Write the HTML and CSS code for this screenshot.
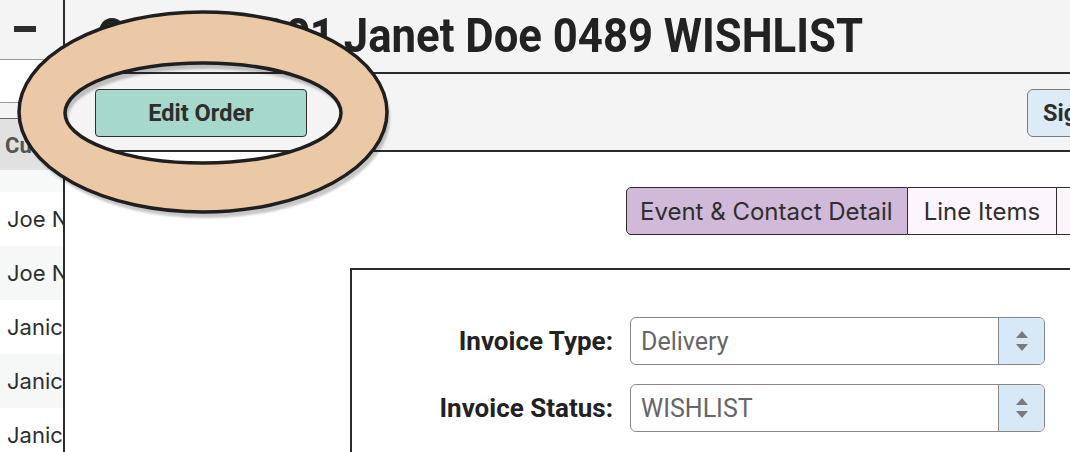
FILE: index.html
```html
<!DOCTYPE html>
<html lang="en">
<head>
    <meta charset="UTF-8">
    <meta name="viewport" content="width=device-width, initial-scale=1.0">
    <title>Order</title>
    <link rel="stylesheet" href="styles.css">
</head>
<body>

    <div class="app">
        <aside class="sidebar">
            <div class="side-top"><span class="collapse"></span></div>
            <div class="side-search"><input type="text" class="search"></div>
            <div class="side-head">Customer</div>
            <div class="side-gap"></div>
            <ul class="side-list">
                <li>Joe Nobody</li>
                <li class="alt">Joe Nobody</li>
                <li>Janice Smith</li>
                <li class="alt">Janice Smith</li>
                <li>Janice Smith</li>
            </ul>
        </aside>

        <main class="main">
            <header class="title-bar">
                <h1><span class="prefix">Order #0001 </span>Janet Doe 0489 WISHLIST</h1>
            </header>

            <div class="toolbar">
                <button class="btn-edit">Edit Order</button>
                <button class="btn-sign">Signature</button>
            </div>

            <div class="content">
                <nav class="tabs">
                    <span class="tab active">Event &amp; Contact Detail</span>
                    <span class="tab">Line Items</span>
                    <span class="tab">Payments</span>
                </nav>

                <section class="panel">
                    <div class="form-grid">
                        <label class="field-label">Invoice Type:</label>
                        <div class="select">
                            <span class="select-value">Delivery</span>
                            <span class="spin">
                                <svg width="14" height="24" viewBox="0 0 14 24">
                                    <polygon points="7,2 13,9 1,9" fill="#7a7a7a"/>
                                    <polygon points="1,15 13,15 7,22" fill="#7a7a7a"/>
                                </svg>
                            </span>
                        </div>

                        <label class="field-label">Invoice Status:</label>
                        <div class="select">
                            <span class="select-value">WISHLIST</span>
                            <span class="spin">
                                <svg width="14" height="24" viewBox="0 0 14 24">
                                    <polygon points="7,2 13,9 1,9" fill="#7a7a7a"/>
                                    <polygon points="1,15 13,15 7,22" fill="#7a7a7a"/>
                                </svg>
                            </span>
                        </div>
                    </div>
                </section>
            </div>
        </main>
    </div>

    <!-- highlight ring drawn over the Edit Order button -->
    <svg class="ring" width="400" height="230" viewBox="0 0 400 230">
        <defs>
            <filter id="soft" x="-10%" y="-10%" width="120%" height="130%">
                <feGaussianBlur stdDeviation="1.2"/>
            </filter>
        </defs>
        <path transform="translate(3,6)" filter="url(#soft)" fill="#000" fill-opacity="0.22" fill-rule="evenodd"
              d="M19,112 a184,100 0 1,0 368,0 a184,100 0 1,0 -368,0 Z M65,113 a138,50 0 1,0 276,0 a138,50 0 1,0 -276,0 Z"/>
        <path fill="#ecc9a6" fill-rule="evenodd" stroke="#1f1f1f" stroke-width="3.5"
              d="M19,112 a184,100 0 1,0 368,0 a184,100 0 1,0 -368,0 Z M65,113 a138,50 0 1,0 276,0 a138,50 0 1,0 -276,0 Z"/>
    </svg>

</body>
</html>
```

FILE: styles.css
```css
* {
    box-sizing: border-box;
}

body {
    margin: 0;
    width: 1070px;
    height: 452px;
    overflow: hidden;
    font-family: Roboto, "Liberation Sans", sans-serif;
    color: #2b2b2b;
    background: #fff;
}

.app {
    display: flex;
    height: 452px;
}

/* sidebar */

.sidebar {
    width: 65px;
    flex-shrink: 0;
    border-right: 2px solid #2b2b2b;
    overflow: hidden;
    background: #fff;
}

.side-top {
    height: 59px;
    background: #f4f4f4;
    padding: 26px 0 0 14px;
}

.collapse {
    display: block;
    width: 22px;
    height: 6px;
    background: #2e2e2e;
}

.side-search {
    height: 59px;
    background: #f4f4f4;
    padding-bottom: 15px;
}

.search {
    display: block;
    width: 100%;
    height: 44px;
    border: 1px solid #9a9a9a;
    border-left: none;
    border-radius: 0 8px 8px 0;
    background: #fff;
}

.side-head {
    height: 52px;
    background: #e1e1e1;
    border-top: 1px solid #666;
    padding: 14px 0 0 5px;
    font-size: 22px;
    font-weight: 700;
    color: #555;
    white-space: nowrap;
}

.side-gap {
    height: 22px;
    background: #f7f8f8;
}

.side-list {
    list-style: none;
    margin: 0;
    padding: 0;
}

.side-list li {
    height: 54px;
    padding: 14px 0 0 7px;
    font-family: Inter, Roboto, sans-serif;
    font-size: 22px;
    color: #2e2e2e;
    white-space: nowrap;
}

.side-list li.alt {
    background: #f6f7f7;
}

/* main */

.main {
    flex: 1;
    min-width: 0;
    overflow: hidden;
}

.title-bar {
    height: 74px;
    background: #f4f4f4;
    border-bottom: 2px solid #2b2b2b;
    padding: 7px 0 0 32px;
}

.title-bar h1 {
    margin: 0;
    font-size: 48px;
    font-weight: 700;
    color: #222;
    white-space: nowrap;
    transform: scaleX(0.91);
    transform-origin: left center;
}

.title-bar .prefix {
    letter-spacing: -1px;
}

.toolbar {
    height: 78px;
    background: #f4f4f4;
    border-bottom: 2px solid #2b2b2b;
    padding: 15px 0 0 30px;
    display: flex;
    align-items: flex-start;
}

.toolbar button {
    height: 48px;
    font-family: Roboto, "Liberation Sans", sans-serif;
    font-size: 23.5px;
    font-weight: 700;
    color: #2e2e2e;
    flex-shrink: 0;
}

.btn-edit {
    width: 212px;
    background: #a7d8cc;
    border: 1.5px solid #2e2e2e;
    border-radius: 4px;
}

.btn-sign {
    width: 140px;
    margin-left: 720px;
    background: #dcebf6;
    border: 1.5px solid #7b7b7b;
    border-radius: 6px;
    text-align: left;
    padding-left: 15px;
}

/* content */

.content {
    padding-top: 35px;
}

.tabs {
    display: flex;
    padding-left: 561px;
    white-space: nowrap;
}

.tab {
    flex-shrink: 0;
    height: 48px;
    padding: 9px 16px 0;
    font-family: Inter, Roboto, sans-serif;
    font-size: 24px;
    color: #2e2e2e;
    background: #fcf5fc;
    border: 1.5px solid #2e2e2e;
    border-left: none;
}

.tab.active {
    padding: 9px 14px 0 13px;
    background: #d0b9d9;
    border-left: 1.5px solid #2e2e2e;
    border-radius: 5px 0 0 5px;
}

.panel {
    margin: 33px 0 0 285px;
    width: 900px;
    height: 200px;
    border-top: 2px solid #2b2b2b;
    border-left: 2px solid #2b2b2b;
    padding-top: 47px;
}

.form-grid {
    display: grid;
    grid-template-columns: 261px 415px;
    column-gap: 17px;
    row-gap: 19px;
    align-items: center;
}

.field-label {
    text-align: right;
    font-size: 26px;
    font-weight: 700;
    color: #222;
}

.select {
    height: 48px;
    display: flex;
    align-items: stretch;
    border: 1.5px solid #878787;
    border-radius: 6px;
    background: #fff;
    overflow: hidden;
}

.select-value {
    flex: 1;
    padding: 9px 0 0 10px;
    font-size: 25px;
    color: #666;
}

.spin {
    width: 46px;
    display: flex;
    align-items: center;
    justify-content: center;
    background: #d7e9f6;
    border-left: 1.5px solid #878787;
}

.ring {
    position: absolute;
    left: 0;
    top: 0;
}
```
